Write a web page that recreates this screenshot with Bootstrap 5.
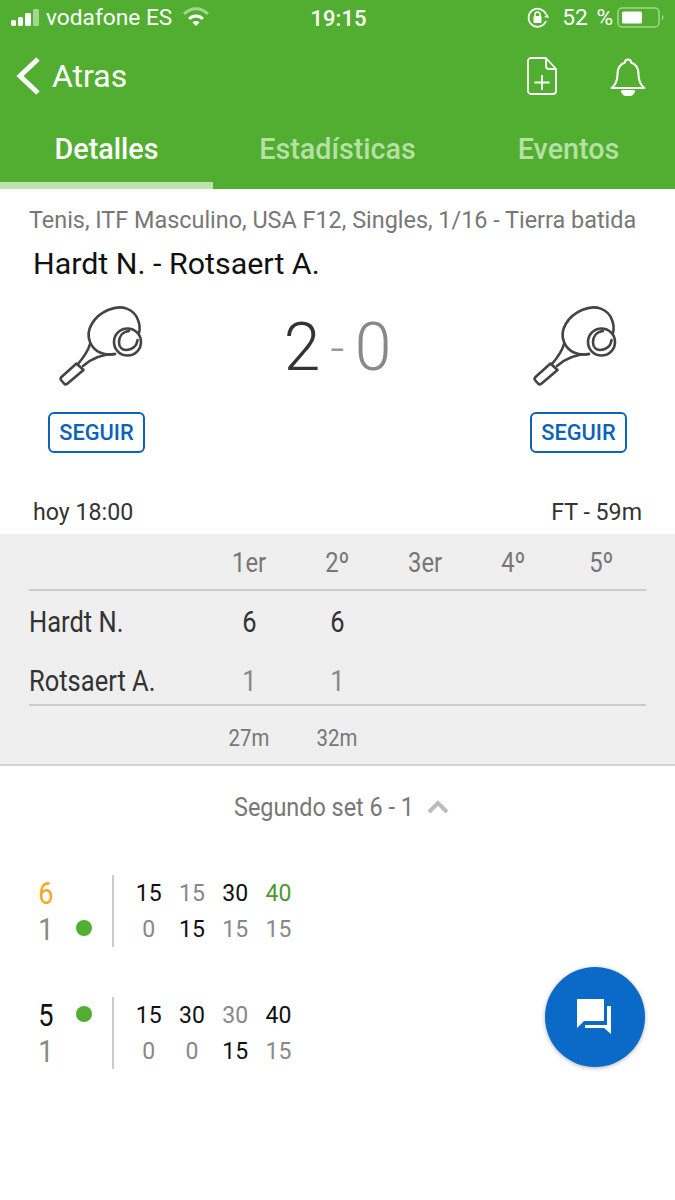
<!DOCTYPE html>
<html lang="es">
<head>
<meta charset="utf-8">
<title>Detalles</title>
<link href="https://cdn.jsdelivr.net/npm/bootstrap@5.3.0/dist/css/bootstrap.min.css" rel="stylesheet">
<style>
body{font-family:Roboto,"Liberation Sans",sans-serif;background:#fff;width:675px;height:1200px;overflow:hidden;position:relative;color:#333}
.app-head{background:#51ae31;color:#fff;height:189px}
.status-row{height:37px;padding:0 10px 0 10px;font-size:22.700px;position:relative}
.status-left,.status-right{flex:1 1 0}
.status-time{font-size:22px;font-weight:500;margin-left:2px}
.battery-pct{word-spacing:3px;margin-left:12px}
.wifi-ico{margin-left:10px}
.nav-row{height:78px;padding:0 29px 0 15px}
.nav-actions{gap:52px}
.back-label{font-size:32px;line-height:1;margin-left:11px}
.tabs-row{height:74px}
.tab-item{font-size:28.700px;font-weight:500;color:#b6e0a5;text-align:center;padding-top:14px;line-height:40px}
.tab-first{width:213px;color:#fff;border-bottom:7px solid #bde2ae}
.tab-mid{width:249px}
.tab-last{width:213px}
.crumb{font-size:23.400px;color:#777;padding:17px 0 0 29px;line-height:28px;height:57px;white-space:nowrap}
.match-name{font-size:30.400px;color:#111;padding-left:33px;line-height:36px;height:36px}
.team-col{width:97px}
.teams-row{padding:22px 48px 0;height:208px}
.racket{display:block;margin:0 0 24px 0}
.racket-left{margin-left:8px}
.follow-btn{--bs-btn-color:#0b63b8;--bs-btn-border-color:#0b63b8;--bs-btn-hover-color:#0b63b8;--bs-btn-hover-bg:#fff;--bs-btn-hover-border-color:#0b63b8;width:97px;height:41px;padding:0;font-size:21.800px;font-weight:500;border-radius:6px;line-height:37px;border-width:2px}
.big-score{font-size:66px;font-weight:300;line-height:1;margin-top:11px;color:#333}
.big-dash{color:#999;margin:0 10px;font-size:50px;line-height:66px}
.big-away{color:#888}
.time-row{padding:0 33px;font-size:23.200px;line-height:28px;height:44px;color:#333}
.sets-box{background:#efefef;height:232px;border-bottom:2px solid #d5d5d5;padding:0 29px}
.sets-grid{display:grid;grid-template-columns:176px repeat(5,88px);width:617px}
.sets-cell{text-align:center}
.sets-head{height:57px;line-height:58px;font-size:28px;color:#777;border-bottom:2px solid #ccc}
.sets-body{font-size:30px;height:59px;line-height:61px;color:#333}
.sets-body .sets-cell{color:#333}
.sets-body .sets-muted{color:#888}
.sets-tall{height:56px;border-bottom:2px solid #ccc}
.sets-foot{height:58px;line-height:64px;font-size:24px;color:#777}
.narrow-txt{display:inline-block;transform:scaleX(.85);white-space:nowrap}
.name-txt{transform-origin:left center}
.set-toggle{font-size:24px;color:#777;height:84px;gap:3px;padding:0 2px 2px 0}
.toggle-txt{font-size:26px;transform:scaleX(.9)}
.game-row{height:72px;margin-bottom:50px;padding-left:34px}
.game-first{margin-top:25px}
.game-left{width:80px;border-right:2px solid #ccc;margin-right:13px}
.game-line{height:36px;line-height:36px}
.g-score{width:24px;text-align:center;font-size:32px;line-height:36px}
.g-dot{width:16px;height:16px;border-radius:50%;background:#51ae31;margin-left:18px;margin-bottom:2px}
.pts{font-size:23px;height:36px;line-height:38px;display:grid;grid-template-columns:repeat(4,43.3px);text-align:center}
.c-win{color:#f5a623}.c-dark{color:#111}.c-mute{color:#888}.c-green{color:#4b9a31}
.fab-chat{position:absolute;left:545px;top:967px;width:100px;height:100px;border-radius:50%;background:#0b69c7;box-shadow:0 1px 4px rgba(0,0,0,.3)}
</style>
</head>
<body>
<header class="app-head">
  <div class="status-row d-flex align-items-center">
    <div class="status-left d-flex align-items-center">
      <svg width="32" height="20" viewBox="0 0 32 20"><g fill="#fff"><rect x="1" y="12" width="5" height="6" rx="1.5"/><rect x="8" y="9" width="5" height="9" rx="1.5"/><rect x="15" y="5" width="6" height="13" rx="1.5"/></g><rect x="23" y="1" width="6" height="17" rx="1.5" fill="#a5d592"/></svg>
      <span class="ms-1">vodafone ES</span>
      <svg class="wifi-ico" width="28" height="22" viewBox="0 0 28 22" fill="none"><path d="M2 7C9 0 19 0 26 7" stroke="#a5d592" stroke-width="3"/><path d="M7 12c4-4 10-4 14 0" stroke="#fff" stroke-width="3"/><path d="M10.500 15.500c2-2 5-2 7 0L14 19z" fill="#fff"/></svg>
    </div>
    <div class="status-time">19:15</div>
    <div class="status-right d-flex align-items-center justify-content-end">
      <svg width="24" height="22" viewBox="0 0 24 22" fill="none"><path d="M20 7.500A9 9 0 1 0 20 14" stroke="#fff" stroke-width="1.800"/><path d="M18 10l3.500-3 1.500 4z" fill="#fff"/><rect x="7.500" y="9" width="8" height="7" rx="1" fill="#fff"/><path d="M9 9V7.500a2.500 2.500 0 0 1 5 0V9" stroke="#fff" stroke-width="1.500"/></svg>
      <span class="battery-pct">52 %</span>
      <svg class="ms-1" width="48" height="22" viewBox="0 0 48 22"><rect x="1" y="1" width="41" height="19" rx="4" fill="none" stroke="#a5d592" stroke-width="1.500"/><rect x="5" y="4.500" width="20" height="12" rx="1.500" fill="#fff"/><path d="M45 8c2 .5 2 4.500 0 5z" fill="#a5d592"/></svg>
    </div>
  </div>
  <div class="nav-row d-flex align-items-center justify-content-between">
    <div class="d-flex align-items-center">
      <svg width="26" height="40" viewBox="0 0 26 40" fill="none"><path d="M23 3L5 20l18 17" stroke="#fff" stroke-width="5"/></svg>
      <span class="back-label">Atras</span>
    </div>
    <div class="nav-actions d-flex align-items-center">
      <svg width="32" height="40" viewBox="0 0 32 40" fill="none" stroke="#fff" stroke-width="1.800" stroke-linejoin="round"><path d="M5 2h15l10 11v22a3 3 0 0 1-3 3H5a3 3 0 0 1-3-3V5a3 3 0 0 1 3-3z"/><path d="M20 2v8a3 3 0 0 0 3 3h7"/><path d="M16 19v15M8.500 26.500h15"/></svg>
      <svg width="36" height="40" viewBox="0 0 36 40" fill="none" stroke="#fff" stroke-width="2" stroke-linejoin="round"><path d="M1.500 32c4-3 6-7 6-14 0-6 3-10 7.500-11.500a3 3 0 0 1 6 0C25.500 8 28.500 12 28.500 18c0 7 2 11 6 14z"/><path d="M12 35a6 4.500 0 0 0 12 0z" fill="#fff"/></svg>
    </div>
  </div>
  <nav class="tabs-row d-flex">
    <div class="tab-item tab-first">Detalles</div>
    <div class="tab-item tab-mid">Estadísticas</div>
    <div class="tab-item tab-last">Eventos</div>
  </nav>
</header>

<main>
  <div class="crumb">Tenis, ITF Masculino, USA F12, Singles, 1/16 - Tierra batida</div>
  <div class="match-name">Hardt N. - Rotsaert A.</div>
  <div class="teams-row d-flex justify-content-between">
    <div class="team-col">
      <svg class="racket racket-left" width="90" height="84" viewBox="0 0 90 84" fill="none" stroke="#444" stroke-width="2.600" stroke-linecap="round" stroke-linejoin="round"><path d="M59 50C48 52 38 48 34 38C29 26 38 12 52 6C66 0 78 5 82 16C84 21 84 25 83 29"/><path d="M34 40C32 48 27 54 22 60M59 50C47 50 35 55 27 62"/><path d="M20.500 59.500L27.500 66L11 80Q9.500 81 8 79.500L5 76Q4 74.500 5.500 73z"/><circle cx="71.500" cy="38" r="13.500"/><path d="M73 27C66 28 63 33 63 38C63 43 66 46 70 46C76 46 81 42 81.500 36"/></svg>
      <button type="button" class="btn btn-outline-primary follow-btn">SEGUIR</button>
    </div>
    <div class="big-score d-flex align-items-start"><span>2</span><span class="big-dash">-</span><span class="big-away">0</span></div>
    <div class="team-col">
      <svg class="racket" width="90" height="84" viewBox="0 0 90 84" fill="none" stroke="#444" stroke-width="2.600" stroke-linecap="round" stroke-linejoin="round"><path d="M59 50C48 52 38 48 34 38C29 26 38 12 52 6C66 0 78 5 82 16C84 21 84 25 83 29"/><path d="M34 40C32 48 27 54 22 60M59 50C47 50 35 55 27 62"/><path d="M20.500 59.500L27.500 66L11 80Q9.500 81 8 79.500L5 76Q4 74.500 5.500 73z"/><circle cx="71.500" cy="38" r="13.500"/><path d="M73 27C66 28 63 33 63 38C63 43 66 46 70 46C76 46 81 42 81.500 36"/></svg>
      <button type="button" class="btn btn-outline-primary follow-btn">SEGUIR</button>
    </div>
  </div>
  <div class="time-row d-flex justify-content-between align-items-center"><span>hoy 18:00</span><span>FT - 59m</span></div>

  <section class="sets-box">
    <div class="sets-grid sets-head">
      <div></div>
      <div class="sets-cell"><span class="narrow-txt">1er</span></div><div class="sets-cell"><span class="narrow-txt">2º</span></div><div class="sets-cell"><span class="narrow-txt">3er</span></div><div class="sets-cell"><span class="narrow-txt">4º</span></div><div class="sets-cell"><span class="narrow-txt">5º</span></div>
    </div>
    <div class="sets-grid sets-body">
      <div><span class="narrow-txt name-txt">Hardt N.</span></div>
      <div class="sets-cell"><span class="narrow-txt">6</span></div><div class="sets-cell"><span class="narrow-txt">6</span></div><div></div><div></div><div></div>
    </div>
    <div class="sets-grid sets-body sets-tall">
      <div><span class="narrow-txt name-txt">Rotsaert A.</span></div>
      <div class="sets-cell sets-muted"><span class="narrow-txt">1</span></div><div class="sets-cell sets-muted"><span class="narrow-txt">1</span></div><div></div><div></div><div></div>
    </div>
    <div class="sets-grid sets-foot">
      <div></div>
      <div class="sets-cell"><span class="narrow-txt">27m</span></div><div class="sets-cell"><span class="narrow-txt">32m</span></div><div></div><div></div><div></div>
    </div>
  </section>

  <div class="set-toggle d-flex align-items-center justify-content-center">
    <span class="narrow-txt toggle-txt">Segundo set 6 - 1</span>
    <svg width="22" height="14" viewBox="0 0 22 14" fill="none"><path d="M2 12l9-9 9 9" stroke="#bbb" stroke-width="4"/></svg>
  </div>

  <div class="game-row game-first d-flex">
    <div class="game-left">
      <div class="game-line d-flex align-items-center"><span class="g-score c-win"><span class="narrow-txt">6</span></span></div>
      <div class="game-line d-flex align-items-center"><span class="g-score c-mute"><span class="narrow-txt">1</span></span><span class="g-dot"></span></div>
    </div>
    <div>
      <div class="pts"><span class="c-dark">15</span><span class="c-mute">15</span><span class="c-dark">30</span><span class="c-green">40</span></div>
      <div class="pts"><span class="c-mute">0</span><span class="c-dark">15</span><span class="c-mute">15</span><span class="c-mute">15</span></div>
    </div>
  </div>
  <div class="game-row d-flex">
    <div class="game-left">
      <div class="game-line d-flex align-items-center"><span class="g-score c-dark"><span class="narrow-txt">5</span></span><span class="g-dot"></span></div>
      <div class="game-line d-flex align-items-center"><span class="g-score c-mute"><span class="narrow-txt">1</span></span></div>
    </div>
    <div>
      <div class="pts"><span class="c-dark">15</span><span class="c-dark">30</span><span class="c-mute">30</span><span class="c-dark">40</span></div>
      <div class="pts"><span class="c-mute">0</span><span class="c-mute">0</span><span class="c-dark">15</span><span class="c-mute">15</span></div>
    </div>
  </div>
</main>

<button type="button" class="fab-chat btn p-0 border-0 d-flex align-items-center justify-content-center" aria-label="Chat">
  <svg width="38" height="36" viewBox="0 0 38 36"><path d="M1 0h27v22H8l-7 7z" fill="#fff"/><path d="M31 7h4v28l-7-6H9v-3h22z" fill="#fff"/></svg>
</button>
<script src="https://cdn.jsdelivr.net/npm/bootstrap@5.3.0/dist/js/bootstrap.bundle.min.js"></script>
</body>
</html>
